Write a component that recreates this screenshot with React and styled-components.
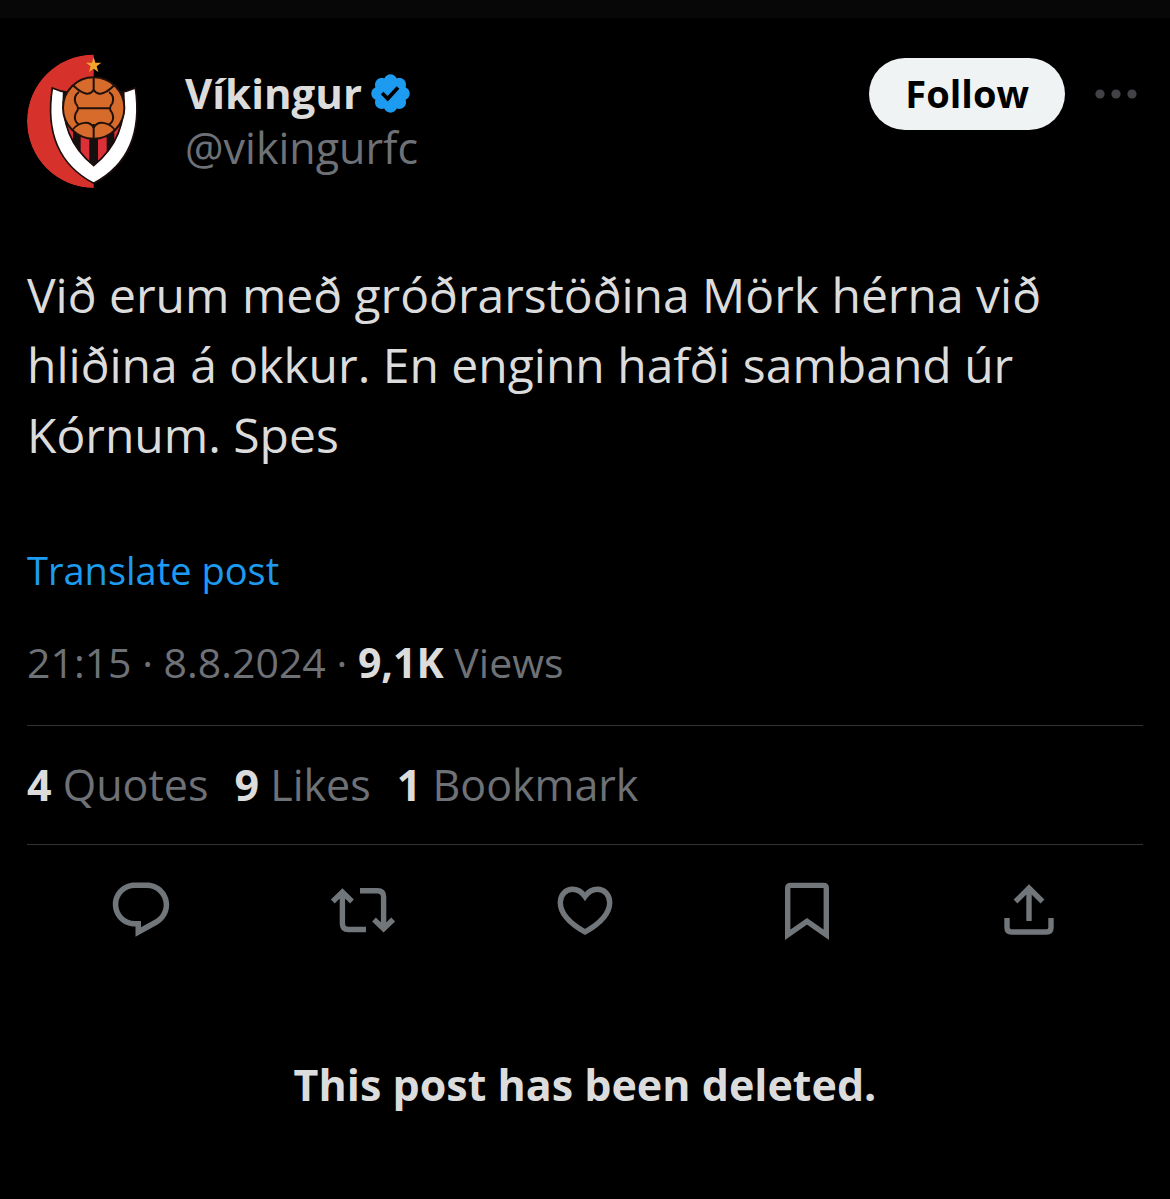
import React from 'react'
import styled, { createGlobalStyle } from 'styled-components'

const GlobalStyle = createGlobalStyle`
  body {
    margin: 0;
    background: #000;
    color: #dcdcdc;
    font-family: 'Open Sans', 'Noto Sans', sans-serif;
  }
  * {
    box-sizing: border-box;
  }
`

const TopBar = styled.div`
  height: 18px;
  background: #070707;
`
const Post = styled.article`
  padding: 36px 27px 0;
`
const Header = styled.header`
  display: flex;
  align-items: flex-start;
`
const Avatar = styled.svg`
  flex: none;
  width: 134px;
  height: 134px;
  border-radius: 50%;
`
const Author = styled.div`
  flex: 1;
  min-width: 0;
  padding: 12px 0 0 24px;
`
const NameRow = styled.div`
  display: flex;
  align-items: center;
  gap: 6px;
`
const Name = styled.h1`
  margin: 0;
  font-size: 42px;
  line-height: 54px;
  font-weight: 700;
`
const Badge = styled.svg`
  width: 45px;
  height: 45px;
  fill: #1d9bf0;
`
const Handle = styled.div`
  font-size: 43px;
  line-height: 56px;
  color: #6e7176;
`
const FollowButton = styled.button`
  height: 72px;
  margin-top: 4px;
  padding: 0 36px 2px;
  border: 0;
  border-radius: 36px;
  background: #eff3f4;
  color: #000;
  font: inherit;
  font-size: 38px;
  font-weight: 700;
`
const MoreButton = styled.button`
  display: flex;
  align-items: center;
  height: 72px;
  margin: 4px 6px 0 30px;
  padding: 0;
  border: 0;
  background: none;
  color: #424347;
`
const Body = styled.p`
  margin: 72px 0 0;
  font-size: 48px;
  line-height: 70px;
`
const Translate = styled.a`
  display: inline-block;
  margin-top: 72px;
  font-size: 38px;
  line-height: 56px;
  color: #1d9bf0;
  text-decoration: none;
`
const Strong = styled.strong`
  font-weight: 700;
  color: #dcdcdc;
`
const Meta = styled.div`
  margin-top: 36px;
  padding-bottom: 35px;
  border-bottom: 1px solid #2f3336;
  font-size: 41px;
  line-height: 56px;
  color: #6e7176;
`
const Stats = styled.div`
  display: flex;
  flex-wrap: wrap;
  gap: 0 26px;
  padding: 31px 0;
  border-bottom: 1px solid #2f3336;
  font-size: 43px;
  line-height: 56px;
  color: #6e7176;
`
const Actions = styled.div`
  display: flex;
  padding: 32px 3px 0;
`
const ActionButton = styled.button`
  flex: 1;
  display: flex;
  justify-content: center;
  padding: 0;
  border: 0;
  background: none;
  color: #71767b;
`
const ActionIcon = styled.svg`
  width: 66px;
  height: 66px;
  fill: none;
  stroke: currentColor;
  stroke-width: ${props => (props.$filled ? 0 : 5.4)};
`
const Notice = styled.p`
  margin: 114px 0 0;
  font-size: 43px;
  line-height: 56px;
  font-weight: 700;
  text-align: center;
`

const Crest = () => (
  <Avatar viewBox="0 0 402 402" role="img" aria-label="Víkingur">
    <defs>
      <clipPath id="stripes">
        <path d="M110 114C102 206 130 278 200 335C270 278 298 206 290 114Z" />
      </clipPath>
    </defs>
    <path d="M200 2A200 200 0 0 0 200 402Z" fill="#d7312b" />
    <path
      d="M76 102Q101 114 128 116H272Q299 114 325 102C342 218 316 326 200 388C84 326 58 218 76 102Z"
      fill="#fff"
      stroke="#1b0d0c"
      strokeWidth="5"
    />
    <g clipPath="url(#stripes)">
      <path d="M100 100H300V340H100Z" fill="#150f10" />
      <path d="M108 200H138V340H108ZM161 200H187V340H161ZM213 200H239V340H213ZM262 200H292V340H262Z" fill="#dc3038" />
    </g>
    <path
      d="M110 114C102 206 130 278 200 335C270 278 298 206 290 114"
      fill="none"
      stroke="#1b0d0c"
      strokeWidth="5"
    />
    <circle cx="200" cy="162" r="92" fill="#d66b2c" stroke="#20100a" strokeWidth="6" />
    <path
      d="M200 70V108M200 254V210M152 163H250M138 94Q166 121 182 119Q196 117 200 106Q204 117 218 119Q234 121 262 94M156 114Q138 126 146 148Q153 155 153 163Q153 171 146 178Q138 200 156 212M246 114Q264 126 256 148Q249 155 249 163Q249 171 256 178Q264 200 246 212M136 228C156 202 190 199 200 222C210 199 244 202 264 228"
      fill="none"
      stroke="#20100a"
      strokeWidth="6"
    />
    <path d="M200 9L205 26L223 26L209 37L214 54L200 44L186 54L191 37L177 26L195 26Z" fill="#f5a52c" />
  </Avatar>
)

const VerifiedBadge = () => (
  <Badge viewBox="0 0 24 24" role="img" aria-label="Verified account">
    <path d="M22.25 12c0-1.43-.88-2.67-2.19-3.34.46-1.39.2-2.9-.81-3.91s-2.52-1.27-3.91-.81c-.66-1.31-1.91-2.19-3.34-2.19s-2.67.88-3.33 2.19c-1.4-.46-2.91-.2-3.92.81s-1.26 2.52-.8 3.91c-1.31.67-2.2 1.91-2.2 3.34s.89 2.67 2.2 3.34c-.46 1.39-.21 2.9.8 3.91s2.52 1.26 3.91.81c.67 1.31 1.91 2.19 3.34 2.19s2.68-.88 3.34-2.19c1.39.45 2.9.2 3.91-.81s1.27-2.52.81-3.91c1.31-.67 2.19-1.91 2.19-3.34zm-11.71 4.2L6.8 12.46l1.41-1.42 2.26 2.26 4.8-5.23 1.47 1.36-6.2 6.77z" />
  </Badge>
)

const stats = [
  { count: 4, label: 'Quotes' },
  { count: 9, label: 'Likes' },
  { count: 1, label: 'Bookmark' }
]

const actions = [
  {
    label: 'Reply',
    filled: true,
    viewBox: '0 0 24 24',
    path: 'M1.751 10c0-4.42 3.584-8 8.005-8h4.366c4.49 0 8.129 3.64 8.129 8.13 0 2.96-1.607 5.68-4.196 7.11l-8.054 4.46v-3.69h-.067c-4.49.1-8.183-3.51-8.183-8.01zm8.005-6c-3.317 0-6.005 2.69-6.005 6 0 3.37 2.77 6.08 6.138 6.01l.351-.01h1.761v2.3l5.087-2.81c1.951-1.08 3.163-3.13 3.163-5.36 0-3.39-2.744-6.13-6.129-6.13H9.756z'
  },
  {
    label: 'Repost',
    path: 'M2.8 24.5L12.4 15L22 24.5M12.4 15V46.5Q12.4 52.5 18.4 52.5H36M30 13.8H47.4Q53.6 13.8 53.6 20V51.5M44 42.5L53.6 51.8L63.2 42.5'
  },
  {
    label: 'Like',
    path: 'M33 19.5C29.5 14.5 25 12.3 20.5 12.3C13.5 12.3 8.3 18 8.3 25.5C8.3 36 18 46.5 33 55C48 46.5 57.7 36 57.7 25.5C57.7 18 52.5 12.3 45.5 12.3C41 12.3 36.5 14.5 33 19.5Z'
  },
  {
    label: 'Bookmark',
    path: 'M13.7 57.8V11.2Q13.7 8.4 16.5 8.4H49.5Q52.3 8.4 52.3 11.2V57.8L33 44.2Z'
  },
  {
    label: 'Share',
    path: 'M33 44V11M19.5 24.5L33 11L46.5 24.5M11 41V50.5Q11 55 15.5 55H50.5Q55 55 55 50.5V41'
  }
]

const App = () => (
  <>
    <GlobalStyle />
    <TopBar />
    <Post>
      <Header>
        <Crest />
        <Author>
          <NameRow>
            <Name>Víkingur</Name>
            <VerifiedBadge />
          </NameRow>
          <Handle>@vikingurfc</Handle>
        </Author>
        <FollowButton type="button">Follow</FollowButton>
        <MoreButton type="button" aria-label="More">
          <svg width="42" height="10" viewBox="0 0 42 10" fill="currentColor">
            <circle cx="5" cy="5" r="4.6" />
            <circle cx="21" cy="5" r="4.6" />
            <circle cx="37" cy="5" r="4.6" />
          </svg>
        </MoreButton>
      </Header>
      <Body>
        Við erum með gróðrarstöðina Mörk hérna við hliðina á okkur. En enginn hafði samband úr Kórnum. Spes
      </Body>
      <Translate href="#translate">Translate post</Translate>
      <Meta>
        21:15 · 8.8.2024 · <Strong>9,1K</Strong> Views
      </Meta>
      <Stats>
        {stats.map(({ count, label }) => (
          <span key={label}>
            <Strong>{count}</Strong> {label}
          </span>
        ))}
      </Stats>
      <Actions>
        {actions.map(({ label, path, filled, viewBox = '0 0 66 66' }) => (
          <ActionButton key={label} type="button" aria-label={label}>
            <ActionIcon $filled={filled} viewBox={viewBox}>
              <path d={path} fill={filled ? 'currentColor' : 'none'} />
            </ActionIcon>
          </ActionButton>
        ))}
      </Actions>
      <Notice>This post has been deleted.</Notice>
    </Post>
  </>
)

export default App
